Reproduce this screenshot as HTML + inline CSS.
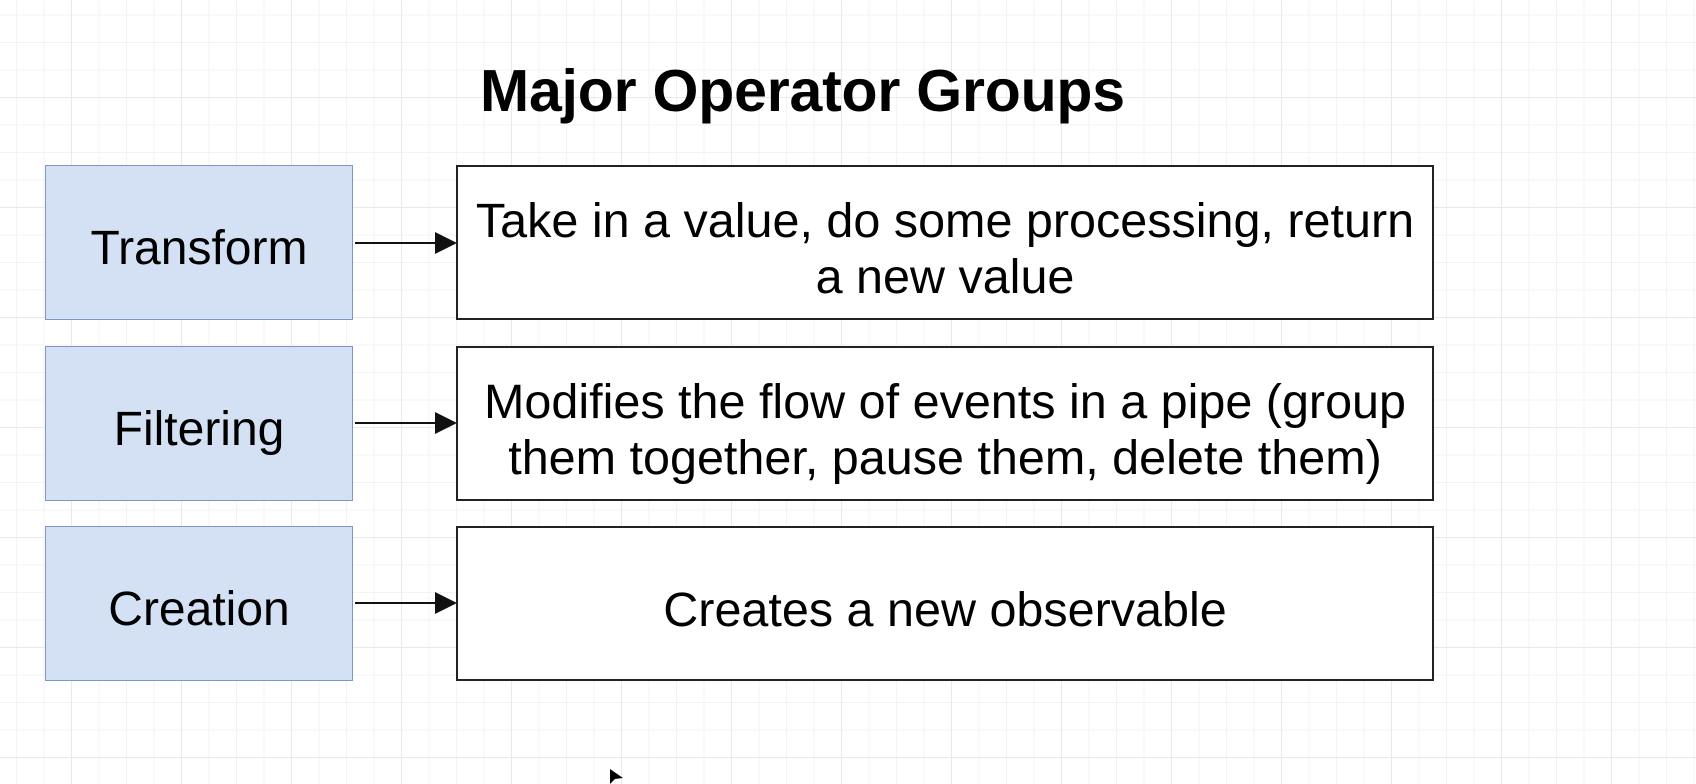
<!DOCTYPE html>
<html><head><style>
html,body{margin:0;padding:0;}
body{width:1696px;height:778px;overflow:hidden;position:relative;background:#fff;
background-image:
linear-gradient(#e9e9e9 1px,transparent 1px),
linear-gradient(90deg,#e9e9e9 1px,transparent 1px),
linear-gradient(#f3f3f3 1px,transparent 1px),
linear-gradient(90deg,#f3f3f3 1px,transparent 1px);
background-size:110px 110px,110px 110px,27.5px 27.5px,27.5px 27.5px;
background-position:0 -13px,-39px 0,0 -13px,-39px 0;
font-family:"Liberation Sans",Arial,sans-serif;color:#000;}
.title{position:absolute;left:480px;top:57px;font-size:59px;line-height:68px;font-weight:bold;white-space:nowrap;letter-spacing:-0.2px}
.l{position:absolute;left:45px;width:306px;height:153px;background:#d4e1f5;border:1.5px solid #7d97c4;display:flex;align-items:center;justify-content:center;font-size:48px;box-sizing:content-box;padding-top:0}
.l span,.r span{position:relative;top:6px}
.r{position:absolute;left:456px;width:974px;height:151px;background:#fff;border:2px solid #222;display:flex;align-items:center;justify-content:center;text-align:center;font-size:48.5px;line-height:56px}
.a{position:absolute;left:355px;width:85px;height:2px;background:#111}
.h{position:absolute;left:435px;width:0;height:0;border-left:22px solid #111;border-top:11px solid transparent;border-bottom:11px solid transparent}
</style></head><body>
<div class="title">Major Operator Groups</div>
<div class="l" style="top:165px"><span>Transform</span></div>
<div class="l" style="top:346px"><span>Filtering</span></div>
<div class="l" style="top:526px"><span>Creation</span></div>
<div class="r" style="top:165px"><span>Take in a value, do some processing, return<br>a new value</span></div>
<div class="r" style="top:346px"><span>Modifies the flow of events in a pipe (group<br>them together, pause them, delete them)</span></div>
<div class="r" style="top:526px"><span>Creates a new observable</span></div>
<div class="a" style="top:242px"></div><div class="h" style="top:232px"></div>
<div class="a" style="top:422px"></div><div class="h" style="top:412px"></div>
<div class="a" style="top:602px"></div><div class="h" style="top:592px"></div>
<svg style="position:absolute;left:609px;top:768px" width="16" height="16"><path d="M1 1 L1 16 L6 11 L14 10 Z" fill="#000"/></svg>
</body></html>
